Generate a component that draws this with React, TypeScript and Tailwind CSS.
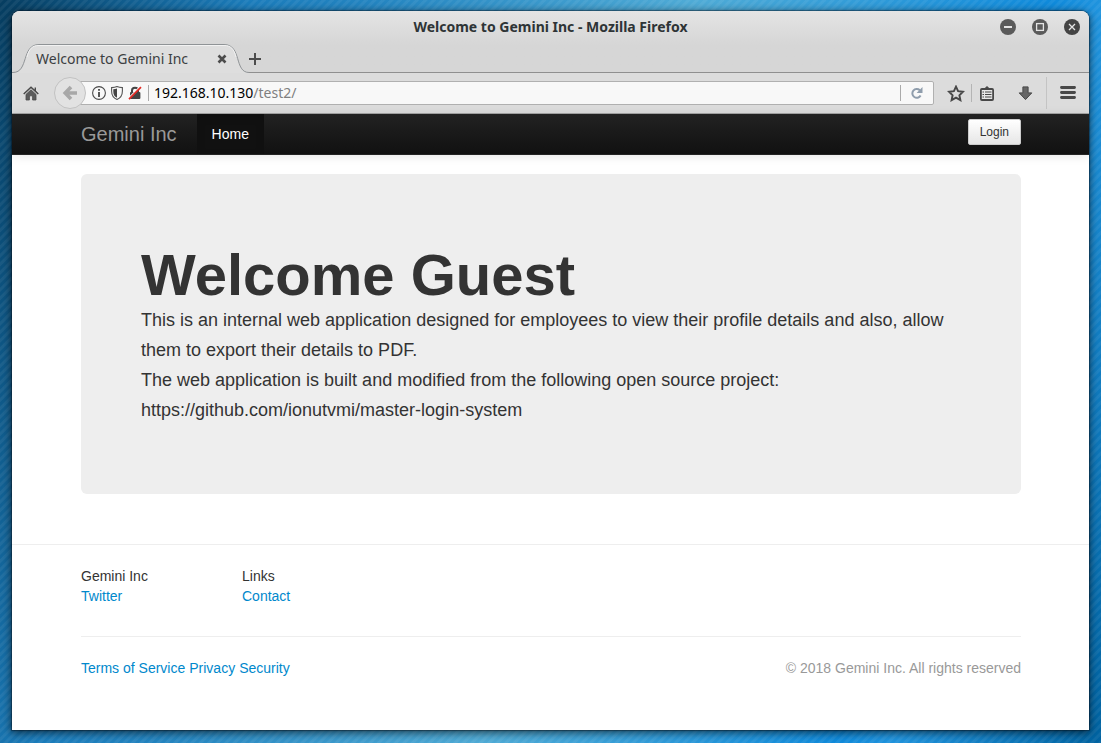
import React from "react";

function HomeIcon() {
  return (
    <svg width="16" height="15" viewBox="0 0 16 15" aria-hidden="true">
      <path d="M8 0.2 L0.2 7.4 L1.2 8.4 L8 2.2 L14.8 8.4 L15.8 7.4 L13 4.8 V1.5 H11.6 V3.5 Z" fill="#4a4a4a" />
      <path d="M8 3.8 L3 8.4 V14 H6.4 V9.8 H9.6 V14 H13 V8.4 Z" fill="#5c5c5c" stroke="#4a4a4a" strokeWidth="0.8" />
    </svg>
  );
}

function BackIcon() {
  return (
    <svg width="16" height="16" viewBox="0 0 16 16" aria-hidden="true">
      <path d="M9 2 L3.2 8 L9 14 M3.4 8 H15" fill="none" stroke="#a8a8a8" strokeWidth="3.6" />
    </svg>
  );
}

function InfoIcon() {
  return (
    <svg width="14" height="14" viewBox="0 0 14 14" aria-hidden="true">
      <circle cx="7" cy="7" r="6.4" fill="none" stroke="#4a4a4a" strokeWidth="1.1" />
      <path d="M6.1 3 H7.9 V4.7 H6.1 Z M6.1 6 H7.9 V11 H6.1 Z" fill="#444" />
    </svg>
  );
}

function ShieldIcon() {
  return (
    <svg width="12" height="14" viewBox="0 0 12 14" aria-hidden="true">
      <path d="M6 0.6 C4.5 1.3 2.5 1.6 0.6 1.6 V5 C0.6 9.5 2.5 12 6 13.4 C9.5 12 11.4 9.5 11.4 5 V1.6 C9.5 1.6 7.5 1.3 6 0.6 Z" fill="#f8f8f8" stroke="#555" strokeWidth="1.1" />
      <path d="M6 2.4 C4.8 2.9 3.6 3.1 2.3 3.2 V5.4 C2.3 8.6 3.6 10.6 6 11.7 Z" fill="#444" />
    </svg>
  );
}

function LockIcon() {
  return (
    <svg width="14" height="14" viewBox="0 0 14 14" aria-hidden="true">
      <path d="M4 7 V4.4 C4 0.8 10 0.8 10 4.4 V7" fill="none" stroke="#444" strokeWidth="2" />
      <rect x="2" y="6" width="10.4" height="7" rx="1" fill="#444" />
      <path d="M0.6 12.2 L12 0.8" stroke="#f8f8f8" strokeWidth="1.6" />
      <path d="M1 13.2 L13 1.2" stroke="#e22b25" strokeWidth="1.7" />
    </svg>
  );
}

function ReloadIcon() {
  return (
    <svg width="12" height="12" viewBox="0 0 12 12" aria-hidden="true">
      <path d="M8.8 3.2 A4.4 4.4 0 1 0 9.6 8.6" fill="none" stroke="#8f9dac" strokeWidth="2" />
      <path d="M11.5 0 V6 H5.6 Z" fill="#8f9dac" />
    </svg>
  );
}

function StarIcon() {
  return (
    <svg width="18" height="17" viewBox="0 0 18 17" aria-hidden="true">
      <path d="M9 1.6 L11.1 6.1 L16 6.7 L12.4 10.2 L13.4 15.2 L9 12.7 L4.6 15.2 L5.6 10.2 L2 6.7 L6.9 6.1 Z" fill="none" stroke="#484848" strokeWidth="1.9" strokeLinejoin="miter" />
    </svg>
  );
}

function ListIcon() {
  return (
    <svg width="14" height="15" viewBox="0 0 14 15" aria-hidden="true">
      <path d="M3.5 3.2 L7 0 L10.5 3.2 Z" fill="#484848" />
      <rect x="0.9" y="3" width="12.2" height="11" rx="1" fill="#e8e8e8" stroke="#484848" strokeWidth="1.8" />
      <path d="M2.5 6 H4 M5 6 H11.5 M2.5 8.5 H4 M5 8.5 H11.5 M2.5 11 H4 M5 11 H11.5" stroke="#484848" strokeWidth="1" />
    </svg>
  );
}

function DownloadIcon() {
  return (
    <svg width="15" height="15" viewBox="0 0 15 15" aria-hidden="true">
      <path d="M4.9 0.9 H10.1 V6.9 H13.8 L7.5 13.6 L1.2 6.9 H4.9 Z" fill="#666" stroke="#484848" strokeLinejoin="round" />
    </svg>
  );
}

function MenuIcon() {
  return (
    <svg width="16" height="14" viewBox="0 0 16 14" aria-hidden="true">
      <path d="M1.5 1.5 H14.5 M1.5 6.5 H14.5 M1.5 11.5 H14.5" stroke="#484848" strokeWidth="2.9" strokeLinecap="round" />
    </svg>
  );
}

function TitleBar() {
  return (
    <header className="grid h-8 grid-cols-[1fr_auto_1fr] items-center px-[9px]">
      <span />
      <h2 className="text-[14px] leading-5 font-bold text-[#2e3436]">Welcome to Gemini Inc - Mozilla Firefox</h2>
      <div className="flex justify-end gap-4">
        <button type="button" aria-label="Minimize">
          <svg width="16" height="16" viewBox="0 0 16 16">
            <circle cx="8" cy="8" r="8" fill="#5a5a5a" />
            <path d="M4 8 H12" stroke="#e4e4e4" strokeWidth="2" />
          </svg>
        </button>
        <button type="button" aria-label="Maximize">
          <svg width="16" height="16" viewBox="0 0 16 16">
            <circle cx="8" cy="8" r="8" fill="#5a5a5a" />
            <rect x="4.6" y="4.6" width="6.8" height="6.8" fill="none" stroke="#e4e4e4" strokeWidth="1.3" />
          </svg>
        </button>
        <button type="button" aria-label="Close window">
          <svg width="16" height="16" viewBox="0 0 16 16">
            <circle cx="8" cy="8" r="8" fill="#444" />
            <path d="M5 5 L11 11 M11 5 L5 11" stroke="#e4e4e4" strokeWidth="1.3" />
          </svg>
        </button>
      </div>
    </header>
  );
}

function TabStrip() {
  return (
    <div className="flex h-[30px] items-stretch">
      <div className="relative w-[237px] shrink-0">
        <svg className="absolute inset-0" width="237" height="30" viewBox="0 0 237 30" aria-hidden="true">
          <path d="M0 29.5 H1 C17 29.5 9 1.5 27 1.5 H212 C230 1.5 222 29.5 237 29.5 V30 H0 Z" fill="#dedede" />
          <path d="M0 29.5 H1 C17 29.5 9 1.5 27 1.5 H212 C230 1.5 222 29.5 237 29.5" fill="none" stroke="#8f9396" />
          <path d="M15 14 C17 6 20 2.5 27 2.5 H212 C219 2.5 222 6 224 14" fill="none" stroke="#f2f2f2" />
        </svg>
        <div className="relative flex h-full items-center justify-between pt-0.5 pr-[22px] pl-6">
          <span className="text-[14px] leading-5 text-[#3c4042]">Welcome to Gemini Inc</span>
          <button type="button" aria-label="Close tab">
            <svg width="10" height="10" viewBox="0 0 10 10">
              <path d="M1.5 1.5 L8.5 8.5 M8.5 1.5 L1.5 8.5" stroke="#4c4c4c" strokeWidth="2.6" />
            </svg>
          </button>
        </div>
      </div>
      <div className="flex flex-1 items-center border-b border-[#8f8f8f] pt-[3px]">
        <button type="button" aria-label="New tab">
          <svg width="12" height="12" viewBox="0 0 12 12">
            <path d="M0 6 H12 M6 0 V12" stroke="#4c4c4c" strokeWidth="2" />
          </svg>
        </button>
      </div>
    </div>
  );
}

function Toolbar() {
  return (
    <div className="flex h-[41px] items-center border-b border-[#a5a5a5] bg-[#dcdcdc] pr-[13px] pl-[11px]">
      <button type="button" aria-label="Home page"><HomeIcon /></button>
      <button type="button" aria-label="Back" className="z-10 ml-[15px] flex size-8 shrink-0 items-center justify-center rounded-full border border-[#c2c2c2] bg-[#e2e2e2]">
        <BackIcon />
      </button>
      <div className="-ml-2 flex h-6 min-w-0 flex-1 items-center rounded-r-xs border border-[#b0b0b0] bg-[#f8f8f8] pl-[13px]">
        <div className="flex items-center gap-[5px]"><InfoIcon /><ShieldIcon /><LockIcon /></div>
        <span className="ml-1.5 h-4 w-px bg-[#aaa]" />
        <label htmlFor="address" className="ml-[5px] text-[14px] leading-5 text-black">192.168.10.130</label>
        <input id="address" type="text" defaultValue="/test2/" className="min-w-0 flex-1 bg-transparent text-[14px] leading-5 text-[#7f7f7f] outline-none" />
        <span className="h-4 w-px bg-[#aaa]" />
        <button type="button" aria-label="Reload" className="px-2.5"><ReloadIcon /></button>
      </div>
      <button type="button" aria-label="Bookmark this page" className="ml-[13px]"><StarIcon /></button>
      <span className="mx-1.5 h-[18px] w-px bg-[#b4b4b4]" />
      <button type="button" aria-label="Show bookmarks" className="ml-0.5"><ListIcon /></button>
      <button type="button" aria-label="Downloads" className="ml-6"><DownloadIcon /></button>
      <span className="mx-[13px] h-8 w-px bg-[#c4c4c4]" />
      <button type="button" aria-label="Open menu"><MenuIcon /></button>
    </div>
  );
}

function SiteNav() {
  return (
    <nav className="relative flex h-[41px] items-stretch border-b border-[#252525] bg-linear-to-b from-[#222] to-[#111] pr-[68px] pl-[69px] shadow-[0_1px_10px_rgba(0,0,0,0.1)]">
      <a href="#" className="mr-5 text-[20px] leading-10 text-[#999]">Gemini Inc</a>
      <a href="#" className="bg-[#111] px-[15px] text-[14px] leading-10 text-white shadow-[inset_0_3px_8px_rgba(0,0,0,0.125)]">Home</a>
      <button type="button" className="mt-[5px] ml-auto h-[26px] rounded-xs border border-[#ccc] bg-linear-to-b from-white to-[#e6e6e6] px-[11px] text-[12px] leading-5 text-[#333]">Login</button>
    </nav>
  );
}

function Hero() {
  return (
    <section className="mt-[19px] mr-[68px] ml-[69px] rounded-md bg-[#eee] px-[60px] pt-[71px] pb-[69px] text-[18px] leading-[30px] text-[#333]">
      <h1 className="text-[58px] leading-[60px] font-bold">Welcome Guest</h1>
      <p>This is an internal web application designed for employees to view their profile details and also, allow them to export their details to PDF.</p>
      <p>The web application is built and modified from the following open source project:<br />https://github.com/ionutvmi/master-login-system</p>
    </section>
  );
}

function SiteFooter() {
  return (
    <footer className="mt-[50px] border-t border-[#eee] pt-[21px] pr-[68px] pl-[69px] text-[14px] leading-5 text-[#333]">
      <div className="flex">
        <div className="w-[161px]">
          <p>Gemini Inc</p>
          <a href="#" className="text-[#0088cc]">Twitter</a>
        </div>
        <div>
          <p>Links</p>
          <a href="#" className="text-[#0088cc]">Contact</a>
        </div>
      </div>
      <hr className="mt-[30px] mb-[21px] border-[#eee]" />
      <div className="flex justify-between">
        <div className="flex gap-1 text-[#0088cc]">
          <a href="#">Terms of Service</a>
          <a href="#">Privacy</a>
          <a href="#">Security</a>
        </div>
        <p className="text-[#999]">© 2018 Gemini Inc. All rights reserved</p>
      </div>
    </footer>
  );
}

export default function App() {
  return (
    <div className="flex min-h-screen flex-col bg-[repeating-linear-gradient(135deg,rgba(255,255,255,0.06)_0px,rgba(255,255,255,0.06)_2px,transparent_3px,transparent_5px,rgba(255,255,255,0.06)_6px),linear-gradient(106deg,#063d60_0%,#1b7cbb_19%,#2384c0_28%,#4fabd6_53%,#0f8adb_80%,#2094de_84%,#0062a0_100%)] px-3 pt-[11px] pb-[13px]">
      <div className="flex flex-1 flex-col overflow-hidden rounded-t-lg bg-white shadow-[0_2px_9px_1px_rgba(0,0,0,0.6),0_0_1px_1px_rgba(0,20,40,0.4)]">
        <div className="-mt-px border-t border-white bg-linear-to-b from-[#e4e4e4] to-[#d6d6d6] to-55% font-['Noto_Sans',sans-serif]">
          <TitleBar />
          <TabStrip />
        </div>
        <div className="font-['Noto_Sans',sans-serif]"><Toolbar /></div>
        <div className="font-['Liberation_Sans',Arial,sans-serif]">
          <SiteNav />
          <Hero />
          <SiteFooter />
        </div>
      </div>
    </div>
  );
}
